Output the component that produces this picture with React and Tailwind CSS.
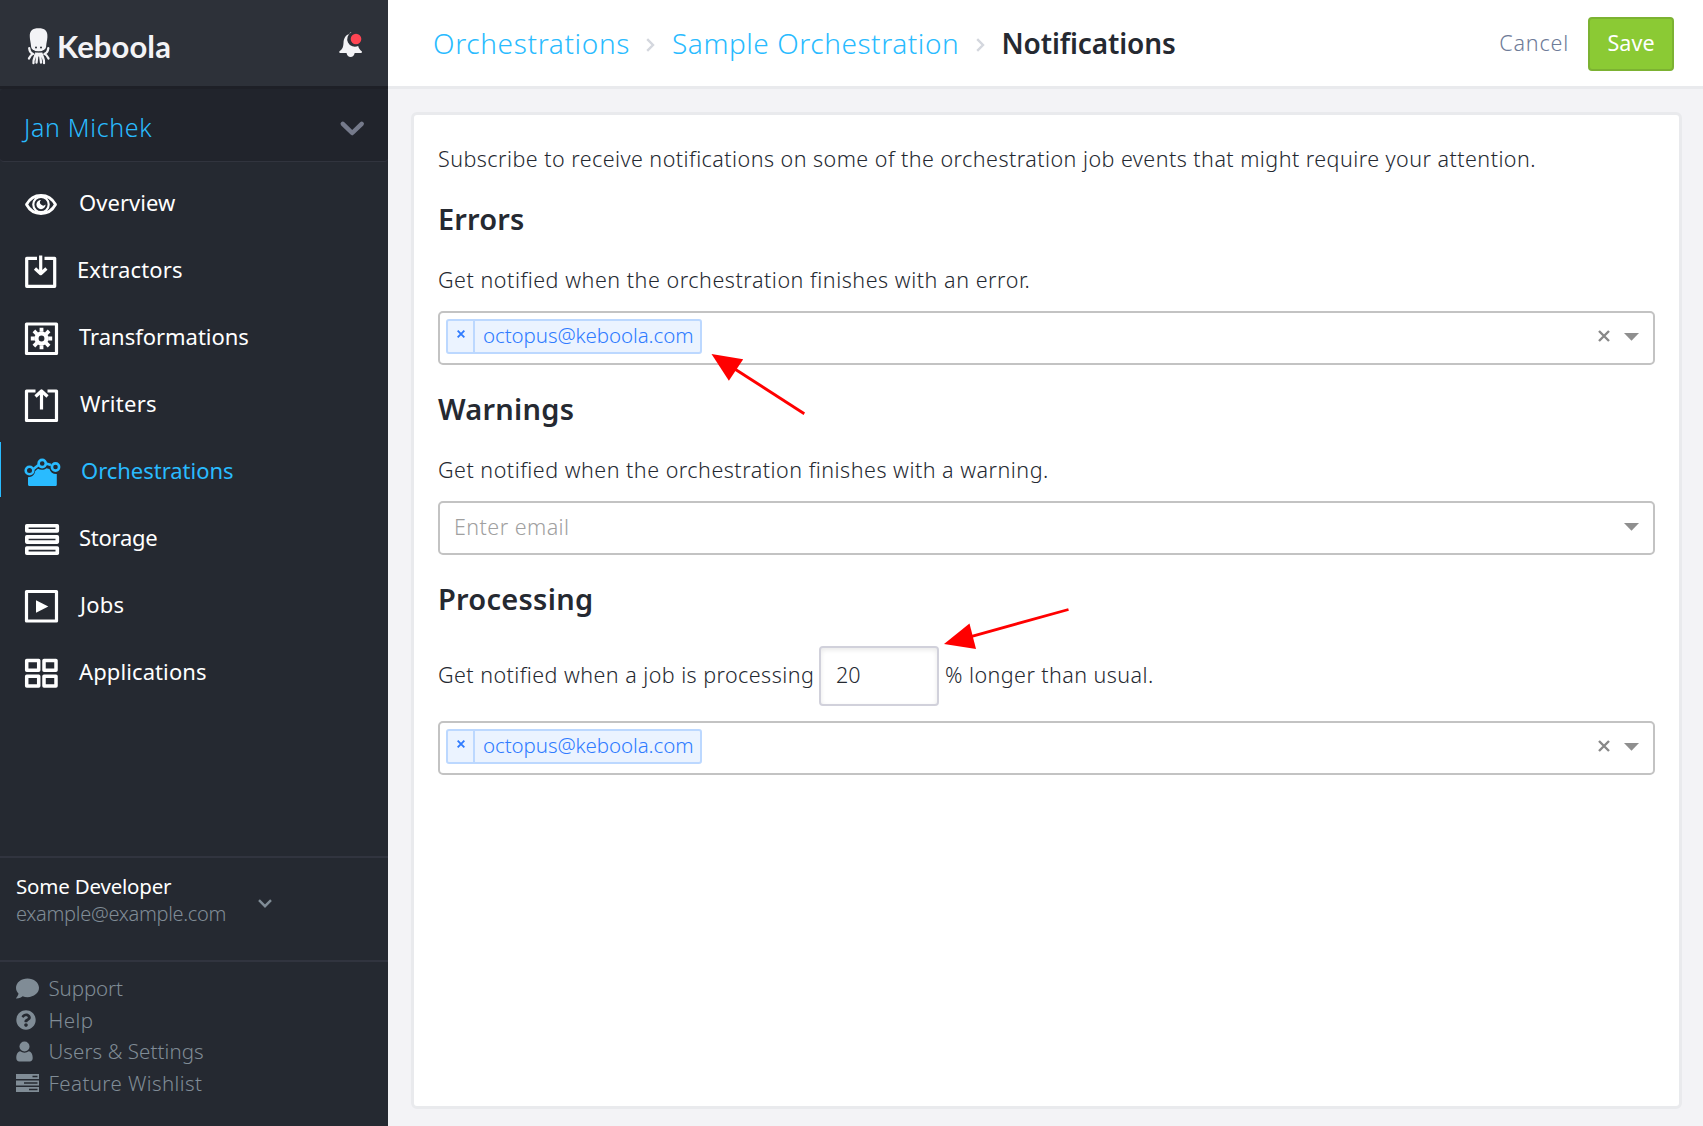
import React from 'react';
import { FaComment, FaQuestionCircle } from 'react-icons/fa';

const OctopusMark = () => (
  <svg width="24" height="38" viewBox="27 27 24 38" fill="none" stroke="#f3f3f6" strokeWidth="2.3" strokeLinecap="round">
    <path d="M32.5 53.5C30.5 53 29.5 50.5 29.2 48.2M45 53.5c2-.5 3-3 3.3-5.3M33 54c-2.2.5-3 2.5-4 4.5M44.5 54c2.2.5 3 2.5 4 4.5M35.5 54.5c-.5 3-2.500 4.500-2 8.500M42 54.500c.5 3 2.500 4.500 2 8.500M37.500 54l-1 8.500M40 54l1 8.500" />
    <path d="M35 52.500h7.500l-1 4h-5.500z" fill="#f3f3f6" stroke="none" />
    <path d="M29.800 37C29.400 30.500 32.500 28.200 38.600 28.200s9.200 2.300 8.800 8.800c-.2 3.500-1 5.800-1.200 8.500 0 4-3.400 6-7.600 6s-7.600-2-7.600-6c-.2-2.700-1-5-1.200-8.500z" fill="#f3f3f6" stroke="none" />
    <circle cx="36" cy="47.5" r="1" fill="#2d3139" stroke="none" />
    <circle cx="41" cy="47.5" r="1" fill="#2d3139" stroke="none" />
    <path d="M33 50.300c2.500 2.200 8.700 2.200 11.200 0" stroke="#2d3139" strokeWidth=".9" />
  </svg>
);

const Bell = () => (
  <svg width="26" height="28" viewBox="338 31 26 28">
    <path d="M351.500 32.300a1.700 1.700 0 0 0-2 1.600c-4.500 1.200-5.800 5-6 9-.2 4.500-1.500 6.500-4 8.300-.6.8-.2 1.700.7 1.700h6.300c.6 2.400 2 4.100 4.100 4.100s3.500-1.700 4.100-4.100h6.300c.9 0 1.300-.9.7-1.700-1.700-1.300-2.900-2.800-3.500-5.200a6.700 6.700 0 0 1-6.700-13.700z" fill="#f3f3f6" />
    <circle cx="356" cy="39" r="5.300" fill="#ff4553" />
  </svg>
);

const NavIcon = ({ children }) => (
  <svg width="40" height="55" viewBox="22 0 40 55" fill="none" stroke="currentColor" strokeWidth="3.200" strokeLinejoin="round" className="shrink-0">
    {children}
  </svg>
);

const icons = {
  Overview: (
    <>
      <path d="M26.500 30.500C29.500 25 35 21.500 41 21.500s11.500 3.500 14.500 9c-3 5.500-8.500 9-14.500 9s-11.500-3.500-14.500-9z" strokeWidth="2.800" />
      <circle cx="41" cy="30.500" r="7.700" strokeWidth="2.200" />
      <path d="M41 26a4.600 4.600 0 1 0 4.600 4.600 2.600 2.600 0 0 1-4.600-4.600z" fill="currentColor" stroke="none" />
    </>
  ),
  Extractors: (
    <>
      <path d="M37 17.300h-10.300v28h28V17.300H44.500" />
      <path d="M40.700 14.500V32M35 27.500l5.700 5.200 5.700-5.200" />
    </>
  ),
  Transformations: (
    <>
      <rect x="26.500" y="16" width="30" height="29.500" />
      <circle cx="41.500" cy="30.500" r="5" strokeWidth="4.200" />
      <path d="M41.500 19.800v4M41.500 37.200v4M30.800 30.500h4M48.200 30.500h4M33.900 22.900l2.900 2.900M46.200 35.200l2.900 2.900M33.900 38.100l2.900-2.900M46.200 25.800l2.900-2.900" strokeWidth="3.800" />
    </>
  ),
  Writers: (
    <>
      <path d="M35.500 16h-9v29.500h30V16h-9" />
      <path d="M41.500 34.500V17M35.500 21.500l6-5.500 6 5.500" />
    </>
  ),
  Orchestrations: (
    <>
      <path d="M33.500 27l5-4M46 21.500l5 1.500" strokeWidth="2.600" />
      <circle cx="29.500" cy="28.500" r="3.800" strokeWidth="2.600" />
      <circle cx="42.200" cy="21.500" r="3.600" strokeWidth="2.600" />
      <circle cx="55.500" cy="25" r="3.600" strokeWidth="2.600" />
      <path d="M28 35.200c4 0 6.800-2.500 7.200-6.200l2.700-2.200c3 1.500 6 1.300 8.600-.5l3 .8c.8 3.300 3.600 5.200 7.300 5V42.500c0 1-.6 1.500-1.500 1.500H29.500c-.9 0-1.500-.6-1.500-1.500z" fill="currentColor" stroke="none" />
    </>
  ),
  Storage: (
    <>
      <rect x="26.800" y="16.700" width="30.500" height="5.200" strokeWidth="3.600" />
      <rect x="26.800" y="27.900" width="30.500" height="5.200" strokeWidth="3.600" />
      <rect x="26.800" y="39" width="30.500" height="5.200" strokeWidth="3.600" />
    </>
  ),
  Jobs: (
    <>
      <rect x="26.500" y="15.500" width="30" height="29.500" />
      <path d="M36 24.300v12.400L48.300 30.500z" fill="currentColor" stroke="none" />
    </>
  ),
  Applications: (
    <>
      <rect x="26.700" y="17.500" width="12" height="9.800" strokeWidth="3.500" />
      <rect x="44" y="17.500" width="12" height="9.800" strokeWidth="3.500" />
      <rect x="26.700" y="33.300" width="12" height="9.800" strokeWidth="3.500" />
      <rect x="44" y="33.300" width="12" height="9.800" strokeWidth="3.500" />
    </>
  ),
};

const nav = [
  ['Overview', 'ml-[17px] tracking-[0.05px]'],
  ['Extractors', 'ml-[15px] tracking-[0.14px]'],
  ['Transformations', 'ml-[17px] tracking-[-0.02px]'],
  ['Writers', 'ml-[18px] tracking-[0.26px]'],
  ['Orchestrations', 'ml-[19px] tracking-[-0.03px]'],
  ['Storage', 'ml-[17px] tracking-[-0.25px]'],
  ['Jobs', 'ml-[18px] tracking-[0.2px]'],
  ['Applications', 'ml-[17px] tracking-[0.1px]'],
];

const UserIcon = () => (
  <svg width="17" height="21" viewBox="0 0 17 21" fill="currentColor">
    <circle cx="8.500" cy="5.500" r="5" />
    <path d="M4.200 10.200c2.500 1.900 6.100 1.900 8.600 0 2.700.5 3.900 3.300 3.900 6.800 0 2.200-1.200 3.500-3 3.500H3.300c-1.800 0-3-1.300-3-3.500 0-3.500 1.200-6.300 3.900-6.800z" />
  </svg>
);

const TasksIcon = () => (
  <svg width="23" height="18" viewBox="0 0 23 18">
    <path fill="currentColor" d="M0 0h23v5H0zM0 6.500h23v5H0zM0 13h23v5H0z" />
    <path fill="#252931" d="M16.500 1.700H21.500v1.500H16.500zM8 8.200h13.500v1.500H8zM13 14.700h8.500v1.500H13z" />
  </svg>
);

const links = [
  ['Support', <FaComment size={23} />, 'tracking-[-0.1px]'],
  ['Help', <FaQuestionCircle size={20} />, 'tracking-[0.4px]'],
  ['Users & Settings', <UserIcon />, 'tracking-[0.07px]'],
  ['Feature Wishlist', <TasksIcon />, 'tracking-[0.4px]'],
];

function Sidebar() {
  return (
    <aside className="flex w-[388px] shrink-0 flex-col bg-[#252931]">
      <div className="flex h-[89px] shrink-0 items-start justify-between border-b-[3px] border-[#1e2027] bg-[#2d3139] pt-[27px] pr-[24px] pl-[27px]">
        <div className="flex">
          <OctopusMark />
          <span className="mt-[1px] ml-[6px] font-['Lato',sans-serif] text-[31px] leading-[36px] font-bold tracking-[0.1px] text-[#f3f3f6]">Keboola</span>
        </div>
        <div className="mt-[4px]"><Bell /></div>
      </div>
      <div className="flex h-[73px] shrink-0 items-center justify-between rounded-[4px] border-b border-[#31343e] bg-[#21242c] pr-[23px] pl-[24px]">
        <span className="pt-[3px] text-[25px] leading-[36px] font-light tracking-[0.65px] text-[#29bbff]">Jan Michek</span>
        <svg width="26" height="18" viewBox="0 0 26 18" fill="none" stroke="#757a8b" strokeWidth="4.500" strokeLinecap="round" strokeLinejoin="round" className="mt-[7px]">
          <path d="M3.800 3.800L13.200 13l9.500-9.200" />
        </svg>
      </div>
      <nav className="flex flex-col gap-[12px] pt-[12px]">
        {nav.map(([name, cls]) => (
          <div
            key={name}
            className={name === 'Orchestrations' ? 'flex h-[55px] border-l border-[#29bbff] pl-[21px] text-[#29bbff]' : 'flex h-[55px] pl-[22px] text-white'}
          >
            <NavIcon>{icons[name]}</NavIcon>
            <span className={`text-[22px] leading-[57px] ${cls}`}>{name}</span>
          </div>
        ))}
      </nav>
      <div className="mt-auto flex h-[104px] shrink-0 border-t-2 border-[#31343f] pt-[14px] pl-[16px]">
        <div className="w-[242px]">
          <div className="text-[20.5px] leading-[28px] tracking-[-0.2px] text-white">Some Developer</div>
          <div className="text-[20px] leading-[28px] font-light tracking-[-0.3px] text-[#808c96]">example@example.com</div>
        </div>
        <svg width="14" height="10" viewBox="0 0 14 10" fill="none" stroke="#808c96" strokeWidth="2.400" className="mt-[27px]">
          <path d="M1 1.200l6 6 6-6" />
        </svg>
      </div>
      <div className="h-[166px] shrink-0 border-t-2 border-[#31343f] pt-[11px] pl-[16px] text-[#808c96]">
        {links.map(([t, icon, cls]) => (
          <div key={t} className="flex h-[31.6px] items-center">
            <span className="flex w-[32.5px] pb-[1px]">{icon}</span>
            <span className={`text-[20.5px] leading-[31px] font-light ${cls}`}>{t}</span>
          </div>
        ))}
      </div>
    </aside>
  );
}

const Chevron = () => (
  <svg width="9" height="14" viewBox="0 0 9 14" fill="none" stroke="#d4d7de" strokeWidth="2.400">
    <path d="M1.200 1.200L7 7l-5.800 5.800" />
  </svg>
);

function Header() {
  return (
    <header className="flex h-[89px] shrink-0 items-start border-b-[3px] border-[#e9eaed] bg-white pr-[29px]">
      <div className="flex items-center pt-[23px] pl-[45px] text-[28px] leading-[40px]">
        <a className="w-[213px] font-light tracking-[0.65px] text-[#29bbff]">Orchestrations</a>
        <span className="w-[26px] pt-[4px]"><Chevron /></span>
        <a className="w-[303.5px] font-light tracking-[0.55px] whitespace-nowrap text-[#29bbff]">Sample Orchestration</a>
        <span className="w-[26px] pt-[4px]"><Chevron /></span>
        <span className="font-semibold tracking-[-0.12px] text-[#252931]">Notifications</span>
      </div>
      <div className="ml-auto flex items-center pt-[17px]">
        <span className="mr-[19px] pb-[2px] text-[21.5px] leading-[30px] font-light tracking-[0.83px] text-[#6e7b98]">Cancel</span>
        <button className="h-[54px] w-[86px] rounded-[4px] border-2 border-[#7cb232] bg-[#8bca34] pb-[2px] text-[21.5px] leading-[30px] tracking-[0.07px] text-white">Save</button>
      </div>
    </header>
  );
}

const Cross = ({ size, width, color }) => (
  <svg width={size} height={size} viewBox="0 0 12 12" fill="none" stroke={color} strokeWidth={width}>
    <path d="M1 1l10 10M11 1L1 11" />
  </svg>
);

function Select({ value, className }) {
  return (
    <div className={`flex h-[54px] items-start rounded-[5px] border-2 border-[#c3c3c3] bg-white pr-[14px] pl-[6px] ${className}`}>
      {value ? (
        <div className="mt-[6px] flex h-[35px] w-[256px] rounded-[3px] border-2 border-[#bcd8ff] bg-[#ebf3ff] text-[#2f7bff]">
          <span className="flex w-[27px] justify-center border-r-2 border-[#bcd8ff] pt-[9px]">
            <Cross size={8} width={2.8} color="#2f7bff" />
          </span>
          <span className="pl-[8px] text-[20.5px] leading-[28px] font-light tracking-[-0.09px]">{value}</span>
        </div>
      ) : (
        <span className="pt-[9px] pl-[8px] text-[21.5px] leading-[30px] font-light tracking-[0.45px] text-[#a0a0a0]">Enter email</span>
      )}
      <div className="mt-[17px] ml-auto flex items-start">
        {value && <Cross size={12} width={2.400} color="#888888" />}
        <svg width="15" height="8" viewBox="0 0 15 8" className="mt-[3px] ml-[14px]" fill="#8f8f8f">
          <path d="M0 0h15L7.500 7.700z" />
        </svg>
      </div>
    </div>
  );
}

function Body() {
  const h = 'text-[29px] leading-[36px] font-semibold';
  const p = 'text-[21.5px] leading-[30px] font-light whitespace-nowrap';
  return (
    <section className="relative mt-[23px] mr-[21px] mb-[17px] ml-[23px] flex-1 rounded-[6px] border-[3px] border-[#e9eaed] bg-white px-[24px] pt-[29px] text-[#252931]">
      <p className={`${p} tracking-[0.46px]`}>
        Subscribe to receive notifications on some of the orchestration job events that might require your attention.
      </p>
      <h2 className={`mt-[27px] tracking-[0.15px] ${h}`}>Errors</h2>
      <p className={`mt-[28px] tracking-[0.54px] ${p}`}>Get notified when the orchestration finishes with an error.</p>
      <Select value="octopus@keboola.com" className="mt-[16px]" />
      <h2 className={`mt-[26px] tracking-[0.25px] ${h}`}>Warnings</h2>
      <p className={`mt-[28px] tracking-[0.5px] ${p}`}>Get notified when the orchestration finishes with a warning.</p>
      <Select className="mt-[16px]" />
      <h2 className={`mt-[26px] tracking-[0.26px] ${h}`}>Processing</h2>
      <div className={`mt-[29px] flex h-[60px] items-center ${p}`}>
        <span className="w-[381px] pb-[2px] tracking-[0.45px]">Get notified when a job is processing</span>
        <div className="flex h-[60px] w-[120px] items-center rounded-[4px] border-2 border-[#d1d1db] pb-[2px] pl-[15px] shadow-[inset_0_2px_5px_rgba(0,0,0,0.09)]">20</div>
        <span className="ml-[6px] pb-[2px] tracking-[0.44px]">% longer than usual.</span>
      </div>
      <Select value="octopus@keboola.com" className="mt-[15px]" />

      <svg width="96" height="64" viewBox="710 352 96 64" className="absolute top-[237px] left-[296px]">
        <path d="M711.500 354l31.700 5.200-14.300 21.600z" fill="#f00" />
        <path d="M734 368.500l70.300 45.200" stroke="#f00" strokeWidth="2.800" />
      </svg>
      <svg width="128" height="44" viewBox="942 607 128 44" className="absolute top-[492px] left-[528px]">
        <path d="M944 644l25.500-20.500 6.500 25.500z" fill="#f00" />
        <path d="M970 636.800l98.500-27.300" stroke="#f00" strokeWidth="2.800" />
      </svg>
    </section>
  );
}

export default function App() {
  return (
    <div className="flex h-[1126px] w-[1703px] overflow-hidden bg-[#f3f3f6] font-['Noto_Sans',sans-serif]">
      <Sidebar />
      <main className="flex flex-1 flex-col">
        <Header />
        <Body />
      </main>
    </div>
  );
}
